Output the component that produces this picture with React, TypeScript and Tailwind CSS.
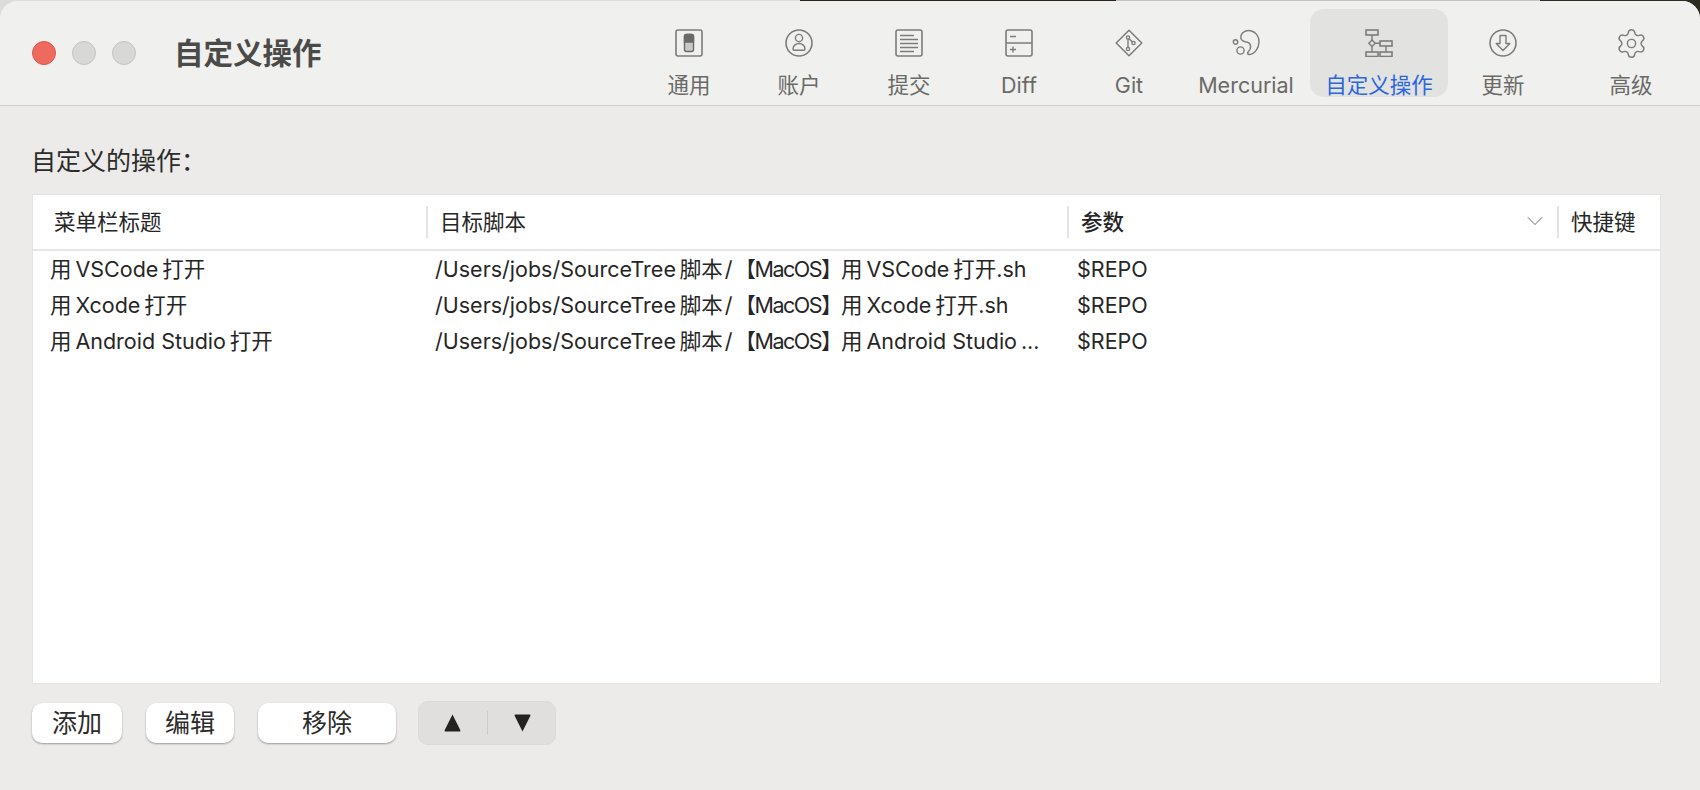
import { ChevronDown, Settings } from "lucide-react";
import type { ReactNode } from "react";

const STROKE = "#7c7c7c";

function Icon({ children }: { children: ReactNode }) {
  return (
    <svg width="28" height="28" viewBox="0 0 28 28" fill="none" stroke={STROKE} strokeWidth="1.4">
      {children}
    </svg>
  );
}

const GeneralIcon = () => (
  <Icon>
    <rect x="1" y="1" width="26" height="26" rx="2" strokeWidth="1.6" />
    <rect x="9.5" y="5.5" width="9" height="17" rx="2" fill="#c9c9c9" stroke="#6a6a6a" />
    <path d="M9.5 13V7.5a2 2 0 0 1 2-2h5a2 2 0 0 1 2 2V13z" fill="#6a6a6a" stroke="#6a6a6a" />
  </Icon>
);

const AccountIcon = () => (
  <Icon>
    <circle cx="14" cy="14" r="13" strokeWidth="1.6" />
    <circle cx="14" cy="9" r="3.6" />
    <path d="M14 14.5c-3.500 0-6 2.600-6 5.200 0 1 1 1.600 2 1.600h8c1 0 2-.6 2-1.600 0-2.600-2.500-5.200-6-5.200z" />
  </Icon>
);

const CommitIcon = () => (
  <Icon>
    <rect x="1" y="1" width="26" height="26" rx="2" strokeWidth="1.6" />
    <path d="M5 6.500h14M5 10.500h18M5 14.500h18M5 18.500h18M5 22.500h14" />
  </Icon>
);

const DiffIcon = () => (
  <Icon>
    <rect x="1" y="1" width="26" height="26" rx="2" strokeWidth="1.6" />
    <path d="M1 14h26" strokeWidth="1.6" />
    <path d="M5 7.500h6M5 20.500h6M8 17.500v6" />
  </Icon>
);

const GitIcon = () => (
  <Icon>
    <path d="M14 1.200 26.800 14 14 26.800 1.200 14z" strokeLinejoin="round" strokeWidth="1.5" />
    <circle cx="13" cy="8.500" r="1.600" />
    <circle cx="18.500" cy="14" r="1.600" />
    <circle cx="13" cy="20" r="1.600" />
    <path d="M13 10.100v8.300M14.100 9.700l3.300 3.200" />
  </Icon>
);

const MercurialIcon = () => (
  <Icon>
    <circle cx="3.500" cy="13" r="2.200" />
    <circle cx="8.500" cy="21.500" r="3.600" />
    <path d="M9 6.500c1-3 5-5.500 9.500-4.800 5 .8 8.500 5.500 8.500 11 0 6.500-4.500 12.500-9.500 12.800-2 .1-2.500-1.500-1.200-2.800 1.700-1.700 2.700-3.700 2.200-6.200-.6-3-3.500-3.500-5.500-3.700C10 12 8 10 9 6.500z" />
  </Icon>
);

const ActionsIcon = () => (
  <Icon>
    <rect x="1" y="1" width="12" height="5" strokeWidth="1.6" />
    <rect x="15" y="12" width="12" height="5" strokeWidth="1.6" />
    <rect x="1" y="23" width="12" height="4.500" strokeWidth="1.6" />
    <rect x="15" y="23" width="12" height="4.500" strokeWidth="1.6" />
    <path d="M7 11l3.200 3.200L7 17.500 3.800 14.200z" />
    <path d="M7 6v5M7 17.500V23M10.200 14.200H15M21 17v6" />
  </Icon>
);

const UpdateIcon = () => (
  <Icon>
    <circle cx="14" cy="14" r="13" strokeWidth="1.6" />
    <path d="M11 6.500h6v8h3.800L14 21.500l-6.800-7H11z" strokeLinejoin="round" />
  </Icon>
);

const GearIcon = () => <Settings size={33} strokeWidth={1.05} color={STROKE} className="-m-[2.5px]" />;

const TABS = [
  { label: "通用", icon: <GeneralIcon />, width: "w-[110px]" },
  { label: "账户", icon: <AccountIcon />, width: "w-[110px]" },
  { label: "提交", icon: <CommitIcon />, width: "w-[110px]" },
  { label: "Diff", icon: <DiffIcon />, width: "w-[110px]" },
  { label: "Git", icon: <GitIcon />, width: "w-[110px]" },
  { label: "Mercurial", icon: <MercurialIcon />, width: "w-[124px] mr-0.5" },
  { label: "自定义操作", icon: <ActionsIcon />, width: "w-[138px]", active: true },
  { label: "更新", icon: <UpdateIcon />, width: "w-[110px] mr-[18px]" },
  { label: "高级", icon: <GearIcon />, width: "w-[110px]" },
];

const ROWS = [
  { title: "用\u2009VSCode\u2009打开", tail: "VSCode\u2009打开.sh" },
  { title: "用\u2009Xcode\u2009打开", tail: "Xcode\u2009打开.sh" },
  { title: "用\u2009Android Studio\u2009打开", tail: "Android Studio\u2009..." },
];

function HeaderCell({ label, first, bold }: { label: string; first?: boolean; bold?: boolean }) {
  return (
    <div className="flex h-full items-center">
      {!first && <div className="h-8 w-0.5 shrink-0 bg-[#e4e4e4]" />}
      <span className={`${first ? "pl-[21px]" : "pl-3"} ${bold ? "font-medium" : ""} text-[21.5px] text-[#262626]`}>{label}</span>
    </div>
  );
}

function PushButton({ label, width }: { label: string; width: string }) {
  return (
    <button className={`${width} h-10 rounded-[10px] bg-white text-[25px] leading-none text-[#2b2b2b] shadow-[0_1px_2px_rgba(0,0,0,0.35)]`}>
      {label}
    </button>
  );
}

export default function App() {
  return (
    <div className="h-[790px] w-[1700px] overflow-hidden bg-[linear-gradient(90deg,#dcdcdc_0,#dcdcdc_800px,#2a2118_800px,#2a2118_1116px,#c4c4c4_1116px,#c4c4c4_1540px,#2c2c22_1540px)] pt-px font-[Inter,'Noto_Sans_CJK_SC',sans-serif]">
      <div className="flex h-[789px] flex-col overflow-hidden rounded-t-[18px] bg-[#ecebe9]">
        <header className="flex h-[105px] shrink-0 items-center border-b border-[#cfcfcd] bg-[#f0f0ee] pl-8 pr-3.5">
          <div className="flex gap-4">
            <div className="size-6 rounded-full border border-[#e0544c] bg-[#ee6a5f]" />
            <div className="size-6 rounded-full border border-[#c4c4c2] bg-[#d8d8d6]" />
            <div className="size-6 rounded-full border border-[#c4c4c2] bg-[#d8d8d6]" />
          </div>
          <h1 className="ml-[38px] mt-px text-[29.5px] font-semibold text-[#4a4a48]">自定义操作</h1>
          <nav className="ml-auto flex self-start pt-2">
            {TABS.map((t) => (
              <div
                key={t.label}
                className={`${t.width} flex h-[88px] flex-col items-center rounded-[14px] pt-5 ${t.active ? "bg-[#e2e2e0]" : ""}`}
              >
                <div className="size-7">{t.icon}</div>
                <span className={`mt-4 whitespace-nowrap text-[21.5px] leading-6 ${t.active ? "text-[#2a66e0]" : "text-[#6a6a68]"}`}>
                  {t.label}
                </span>
              </div>
            ))}
          </nav>
        </header>

        <main className="flex flex-1 flex-col pl-8 pr-[39px] pt-[41px]">
          <div className="-ml-px mb-[19px] h-7 text-[25px] leading-7 text-[#2b2b2b]">自定义的操作：</div>

          <div className="h-[490px] border border-[#e4e4e2] bg-white">
            <div className="grid h-14 grid-cols-[393px_641px_490px_1fr] border-b-2 border-[#e6e6e6]">
              <HeaderCell label="菜单栏标题" first />
              <HeaderCell label="目标脚本" />
              <div className="relative h-full">
                <HeaderCell label="参数" bold />
                <ChevronDown size={28} strokeWidth={0.9} color="#8a8a8a" className="absolute right-2 top-3" />
              </div>
              <HeaderCell label="快捷键" />
            </div>
            <div>
              {ROWS.map((r) => (
                <div key={r.title} className="grid h-9 grid-cols-[393px_641px_490px_1fr] items-center text-[21.5px] text-[#262626]">
                  <div className="whitespace-nowrap pl-[17px]">{r.title}</div>
                  <div className="whitespace-nowrap pl-[9px]">
                    /Users/jobs/SourceTree{"\u2009"}脚本{"\u200A"}/{"\u200A"}
                    <span className="tracking-[-1.5px]">【MacOS】</span>
                    用{"\u2009"}
                    {r.tail}
                  </div>
                  <div className="pl-2.5">$REPO</div>
                  <div />
                </div>
              ))}
            </div>
          </div>

          <div className="mt-[17px] flex items-center">
            <PushButton label="添加" width="w-[90px]" />
            <div className="ml-6">
              <PushButton label="编辑" width="w-[88px]" />
            </div>
            <div className="ml-6">
              <PushButton label="移除" width="w-[138px]" />
            </div>
            <div className="ml-[22px] flex h-11 w-[138px] items-center justify-between rounded-[10px] border border-[#dbdad8] bg-[#e0dfdd] pl-[25px] pr-6">
              <svg width="17" height="18" viewBox="0 0 17 18" fill="#222">
                <path d="M8.500 0.500 16.500 16.500a1 1 0 0 1-1 1H1.500a1 1 0 0 1-1-1z" />
              </svg>
              <div className="h-6 w-px bg-[#cdccca]" />
              <svg width="17" height="18" viewBox="0 0 17 18" fill="#222">
                <path d="M8.500 17.500 16.500 1.500a1 1 0 0 0-1-1H1.500a1 1 0 0 0-1 1z" />
              </svg>
            </div>
          </div>
        </main>
      </div>
    </div>
  );
}
